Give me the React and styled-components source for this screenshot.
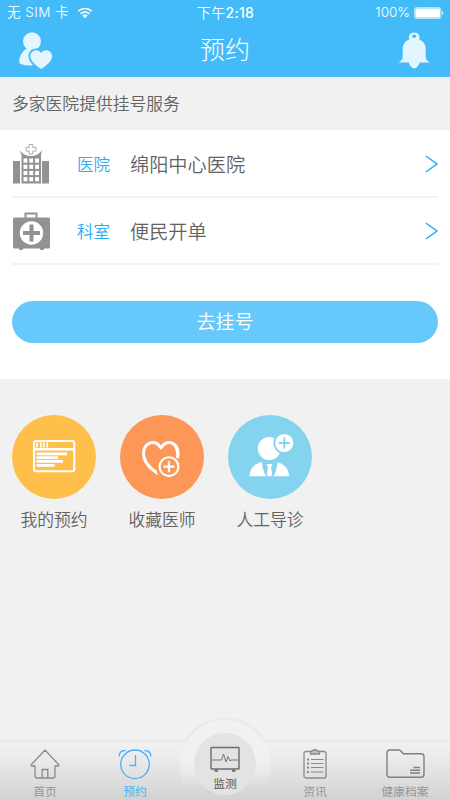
import React from 'react';
import styled, { createGlobalStyle } from 'styled-components';

const GlobalStyle = createGlobalStyle`
  * {
    box-sizing: border-box;
  }

  body {
    margin: 0;
    background: #f1f1f1;
    font-family: 'Liberation Sans', 'Noto Sans CJK SC', sans-serif;
    font-weight: 350;
    color: #626262;
  }

  svg {
    display: block;
    flex: none;
  }
`;

const Screen = styled.div`
  width: 450px;
  height: 800px;
  display: flex;
  flex-direction: column;
  overflow: hidden;
  background: #f1f1f1;
`;

const Header = styled.header`
  height: 77px;
  background: #43bbf9;
  color: #fff;
`;

const StatusBar = styled.div`
  height: 25px;
  padding: 0 6px 0 7px;
  display: grid;
  grid-template-columns: 1fr auto 1fr;
  align-items: center;
  font-family: Inter, 'Noto Sans CJK SC', sans-serif;
  font-size: 13.5px;
  line-height: 25px;
`;

const StatusGroup = styled.div`
  display: flex;
  align-items: center;
  justify-content: ${(p) => (p.$end ? 'flex-end' : 'flex-start')};
  gap: ${(p) => (p.$end ? '4px' : '8px')};
  letter-spacing: ${(p) => (p.$end ? '0' : '0.45px')};
`;

const Time = styled.div`
  font-size: 14px;
  letter-spacing: 0.3px;

  b {
    font-weight: 500;
  }
`;

const TitleBar = styled.div`
  height: 52px;
  padding: 0 18px;
  display: flex;
  align-items: center;
  justify-content: space-between;

  h1 {
    margin: 0 0 3px;
    font-size: 25px;
    line-height: 48px;
    font-weight: 300;
  }
`;

const Notice = styled.div`
  height: 53px;
  padding: 1px 0 0 12px;
  font-size: 16.8px;
  line-height: 53px;
`;

const Panel = styled.section`
  height: 249px;
  padding: 1px 12px 0;
  background: #fff;
`;

const Row = styled.div`
  height: 67px;
  display: flex;
  align-items: center;
  border-bottom: 2px solid #f3f3f3;
`;

const RowLabel = styled.span`
  width: 53px;
  margin-left: 27px;
  font-size: 16.5px;
  color: #27aefa;
`;

const RowValue = styled.span`
  flex: 1;
  font-size: 19.2px;
`;

const Button = styled.button`
  display: block;
  width: 100%;
  height: 42px;
  margin-top: 36px;
  padding: 2px 0 0;
  border: 0;
  border-radius: 21px;
  background: #66c8fb;
  color: #fff;
  font-family: inherit;
  font-size: 19px;
  font-weight: 350;
  line-height: 40px;
`;

const Shortcuts = styled.section`
  flex: 1;
  display: flex;
  gap: 24px;
  padding: 36px 12px 0;
`;

const Shortcut = styled.div`
  width: 84px;
  text-align: center;
  font-size: 16.8px;
  line-height: 24px;
`;

const Disc = styled.div`
  width: 84px;
  height: 84px;
  margin-bottom: 10px;
  border-radius: 50%;
  background: ${(p) => p.$color};
`;

const TabBar = styled.nav`
  position: relative;
  height: 60px;
  display: grid;
  grid-template-columns: repeat(5, 1fr);
  border-top: 2px solid #e9e9e9;
  background: linear-gradient(#f1f1f1, #ececec 25%, #d2d2d2);
`;

// raised part of the bar behind the middle tab
const Bump = styled.div`
  position: absolute;
  left: 179px;
  top: -25px;
`;

const Tab = styled.div`
  position: relative;
  display: flex;
  flex-direction: column;
  align-items: center;
  padding-top: ${(p) => (p.$raised ? '4px' : '7px')};
  font-size: 11.8px;
  font-weight: 400;
  line-height: 16px;
  color: ${(p) => p.$color || '#979797'};

  span {
    margin-top: ${(p) => (p.$raised ? '3px' : '4px')};
  }
`;

const WifiIcon = () => (
    <svg width="16" height="12" viewBox="0 0 15 12" fill="none" stroke="#fff" strokeWidth="1.600">
        <path d="M.7 4.300a9.700 9.700 0 0 1 13.600 0M3 6.800a6.400 6.400 0 0 1 9 0" />
        <path d="M7.500 11.200 4.900 8.600a3.700 3.700 0 0 1 5.200 0z" fill="#fff" stroke="none" />
    </svg>
);

const BatteryIcon = () => (
    <svg width="30" height="12" viewBox="0 0 30 12">
        <rect x=".5" y=".5" width="26.500" height="11" rx="2" fill="#7ed1fb" stroke="#b4e4fd" />
        <rect x="1.500" y="1.500" width="24.500" height="9" rx="1" fill="#fff" />
        <path d="M28 4v4c1.700-.4 1.700-3.600 0-4z" fill="#d5f0fe" />
    </svg>
);

const FriendIcon = () => (
    <svg width="35" height="38" viewBox="0 0 35 38" fill="#e3f5fe">
        <circle cx="14" cy="9.300" r="9" />
        <path d="M8.500 16.500C3.500 20 1.200 25 1.200 30q0 1.500 1.500 2Q8 34 14 33.500L24 22 18 16z" />
        <path
            d="M23.200 37C19.500 34.800 12.300 29.500 12.300 24.300c0-6 8-8.200 10.900-3.300 2.900-4.900 10.900-2.700 10.900 3.300 0 5.200-7.200 10.500-10.900 12.700z"
            stroke="#43bbf9"
            strokeWidth="3.600"
            paintOrder="stroke"
        />
    </svg>
);

const BellIcon = () => (
    <svg width="35" height="38" viewBox="0 0 35 38" fill="#e3f5fe">
        <path
            fillRule="evenodd"
            d="M12.300 7.500C10.800 4 13 .5 17.200.5s6.400 3.500 4.900 7C26.500 9 28.700 12.500 28.700 17v8q0 3 4.300 5.500H22.600C21.500 34 19.500 36.500 17.200 36.500s-4.300-2.500-5.400-6H1.500q4.200-2.500 4.200-5.500v-8c0-4.500 2.200-8 6.600-9.500zM17.200 2.500a2.100 1.700 0 1 0 0 3.400 2.100 1.700 0 1 0 0-3.400z"
        />
    </svg>
);

const HospitalIcon = () => (
    <svg width="38" height="42" viewBox="0 0 38 42" fill="#929292">
        <path d="M1 18h7v22.500H1zM30 18h7v22.500h-7z" />
        <path d="M7.500 7C11 11.500 15 13 19 13s8-1.500 11.500-6L29 11.500v29H9.500v-29z" />
        <path
            d="M17.200 1.500h3.600v3h3.200v3.600h-3.200v3h-3.600v-3H14V4.500h3.200z"
            fill="#fff"
            stroke="#a5a5a5"
            strokeWidth=".9"
        />
        <g fill="#fff">
            {[15.5, 21.7, 27.9, 34.100].map((y) =>
                [11.5, 17.3, 23.100].map((x) => <rect key={`${x}-${y}`} x={x} y={y} width="3.900" height="4.200" />),
            )}
        </g>
    </svg>
);

const KitIcon = () => (
    <svg width="38" height="40" viewBox="0 0 38 40" fill="#929292">
        <path d="M13.500 7V2.500h11V7" fill="none" stroke="#929292" strokeWidth="2" />
        <rect x="1" y="6.500" width="37" height="31" rx="1.500" />
        <path d="M7 37h4v1.500q-2 1-4 0zM28 37h4v1.500q-2 1-4 0z" />
        <circle cx="19.500" cy="22" r="11.700" fill="#fff" />
        <path d="M19.500 13.500v17M11 22h17" stroke="#929292" strokeWidth="4" />
    </svg>
);

const Chevron = () => (
    <svg width="13" height="18" viewBox="0 0 13 18" fill="none" stroke="#27aefa" strokeWidth="1.500">
        <path d="M.8 1 12 9 .8 17" />
    </svg>
);

const BookingArt = () => (
    <svg width="84" height="84" viewBox="0 0 84 84" fill="none" stroke="#fff">
        <rect x="22" y="26" width="40.300" height="30.200" rx="2" strokeWidth="2" />
        <path d="M21.500 34.200h41" strokeWidth="2.500" />
        <path d="M25.500 27.800q-1.500 2.200 0 4.500M28.800 27.500v5M31.800 27.500v5M35.200 27.500v5" strokeWidth="1.800" />
        <path d="M24.500 38.800h30.500M24.500 42.600h21.500M24.500 46.400h26.500M24.500 50.300h18" strokeWidth="2.700" />
    </svg>
);

const DoctorFavArt = () => (
    <svg width="84" height="84" viewBox="0 0 84 84" fill="none" stroke="#fff">
        <path
            d="M38 60.300C28 54.500 22 46.500 22 38.500 22 30.500 27.500 26 33 26c3.500 0 6 1.500 8 4.500 2-3 4.500-4.500 8.200-4.500C56 26 61.500 33 59 43.500l-3-.5c1.200-8-2.300-14-7-14-3.500 0-5.500 3.500-8 6-2.500-2.500-4.500-6-8-6-4 0-8 3.500-8 9.500C25 45.500 31 51.500 36.500 55.500z"
            fill="#fff"
            stroke="none"
        />
        <circle cx="49" cy="51.700" r="11.600" fill="#fc9757" stroke="none" />
        <circle cx="49" cy="51.700" r="9.400" strokeWidth="2.100" />
        <path d="M49 46.200v11M43.500 51.700h11" strokeWidth="2.300" />
    </svg>
);

const GuideArt = () => (
    <svg width="84" height="84" viewBox="0 0 84 84" fill="#fff">
        <circle cx="41.300" cy="33.500" r="11.500" />
        <path d="M21.300 61.300C22 53.500 26.500 48.500 34 47h14.500c7.500 1.500 12 6.500 12.800 14.300z" />
        <path d="M33.700 46.500Q34.500 55 38 61.500h7.500Q49 55 49.800 46.500z" fill="#84d4ef" />
        <path d="M38.500 49h6l-1.500 3 1.200 7.500-1.200 1.800h-3l-1.200-1.800L40 52z" />
        <circle cx="56.300" cy="28" r="10" stroke="#84d4ef" strokeWidth="1.800" />
        <path d="M56.300 22.500v11M50.800 28h11" stroke="#84d4ef" strokeWidth="1.800" />
    </svg>
);

const HomeTabIcon = () => (
    <svg width="30" height="31" viewBox="0 0 30 31" fill="none" stroke="#8a8a8a" strokeWidth="1.300">
        <path d="M15 1 1.200 15.800q-.3 1.200 1 1.200H5v9.500q0 2.500 2 2.500h16q2 0 2-2.500V17h2.800q1.300 0 1-1.200z" strokeLinejoin="round" />
        <path d="M12.200 29v-8.500h5.600V29" />
    </svg>
);

const ClockTabIcon = () => (
    <svg width="34" height="31" viewBox="0 0 34 31" fill="none" stroke="#43b5f3" strokeWidth="1.300">
        <circle cx="17" cy="15.300" r="14.300" />
        <path d="M17.500 6v10.500H11.500M1.200 7.500Q1 1.500 7.500 1.500M32.800 7.500Q33 1.500 26.500 1.500" />
    </svg>
);

const MonitorTabIcon = () => (
    <svg width="30" height="27" viewBox="0 0 30 27" fill="none" stroke="#6c6c6c" strokeWidth="1.300">
        <rect x="1" y="1.500" width="28" height="21.500" rx=".5" strokeWidth="1.400" />
        <path d="M1.500 14H11.500l2-6 2.500 8 2-5.500 2 4.500 1-1H28.500" strokeWidth=".9" />
        <path d="M4.500 24.700h3.500M22 24.700h3.500" strokeWidth="2" />
    </svg>
);

const NewsTabIcon = () => (
    <svg width="24" height="31" viewBox="0 0 24 31" fill="none" stroke="#8a8a8a" strokeWidth="1.300">
        <rect x="1" y="2.500" width="22" height="26.500" rx="2" />
        <path d="M7.500 2.500v2.500h9V2.500L14.500 2q-2.500-2.500-5 0z" fill="#c0c0c0" />
        <path d="M8 10.500h12.500M8 14.500h12.500M8 18.500h12.500M8 23h12.500" strokeWidth="1.100" />
        <path d="M4 10.500h2M4 14.500h2M4 18.500h2M4 23h2" strokeWidth="1.800" />
    </svg>
);

const FolderTabIcon = () => (
    <svg width="39" height="31" viewBox="0 0 39 31" fill="none" stroke="#808080" strokeWidth="1.400">
        <path d="M1 4q0-3 3-3h8.500q1.500 0 2.500 1.200l2.500 2.600h17.500q3 0 3 3V25q0 3.300-3 3.300H4q-3 0-3-3.300z" />
        <path d="M27.500 18.500h6.500M24 21.200h10M24 24h10" />
    </svg>
);

const rows = [
    { label: '医院', value: '绵阳中心医院', Icon: HospitalIcon },
    { label: '科室', value: '便民开单', Icon: KitIcon },
];

const shortcuts = [
    { label: '我的预约', color: '#fec04b', Art: BookingArt },
    { label: '收藏医师', color: '#fc9757', Art: DoctorFavArt },
    { label: '人工导诊', color: '#84d4ef', Art: GuideArt },
];

const tabs = [
    { label: '首页', Icon: HomeTabIcon },
    { label: '预约', Icon: ClockTabIcon, color: '#43b5f3' },
    { label: '监测', Icon: MonitorTabIcon, color: '#555', raised: true },
    { label: '资讯', Icon: NewsTabIcon },
    { label: '健康档案', Icon: FolderTabIcon },
];

const App = () => (
    <>
        <GlobalStyle />
        <Screen>
            <Header>
                <StatusBar>
                    <StatusGroup>
                        <span>无 SIM 卡</span>
                        <WifiIcon />
                    </StatusGroup>
                    <Time>下午<b>2:18</b></Time>
                    <StatusGroup $end>
                        <span>100%</span>
                        <BatteryIcon />
                    </StatusGroup>
                </StatusBar>
                <TitleBar>
                    <FriendIcon />
                    <h1>预约</h1>
                    <BellIcon />
                </TitleBar>
            </Header>

            <Notice>多家医院提供挂号服务</Notice>

            <Panel>
                {rows.map(({ label, value, Icon }) => (
                    <Row key={label}>
                        <Icon />
                        <RowLabel>{label}</RowLabel>
                        <RowValue>{value}</RowValue>
                        <Chevron />
                    </Row>
                ))}
                <Button>去挂号</Button>
            </Panel>

            <Shortcuts>
                {shortcuts.map(({ label, color, Art }) => (
                    <Shortcut key={label}>
                        <Disc $color={color}>
                            <Art />
                        </Disc>
                        {label}
                    </Shortcut>
                ))}
            </Shortcuts>

            <TabBar>
                <Bump>
                    <svg width="92" height="83" viewBox="0 0 92 83">
                        <defs>
                            <linearGradient id="bump" x1="0" y1="0" x2="0" y2="1">
                                <stop offset="0" stopColor="#f1f1f1" />
                                <stop offset=".4" stopColor="#f1f1f1" />
                                <stop offset=".75" stopColor="#f1f1f1" stopOpacity="0" />
                            </linearGradient>
                        </defs>
                        <circle cx="46" cy="47" r="45.500" fill="url(#bump)" />
                        <path d="M6.500 24.500A45.500 45.500 0 0 1 85.500 24.500" fill="none" stroke="#e8e8e8" strokeWidth="1.500" />
                        <circle cx="46" cy="47" r="31" fill="#e3e3e3" />
                    </svg>
                </Bump>
                {tabs.map(({ label, Icon, color, raised }) => (
                    <Tab key={label} $color={color} $raised={raised}>
                        <Icon />
                        <span>{label}</span>
                    </Tab>
                ))}
            </TabBar>
        </Screen>
    </>
);

export default App;
